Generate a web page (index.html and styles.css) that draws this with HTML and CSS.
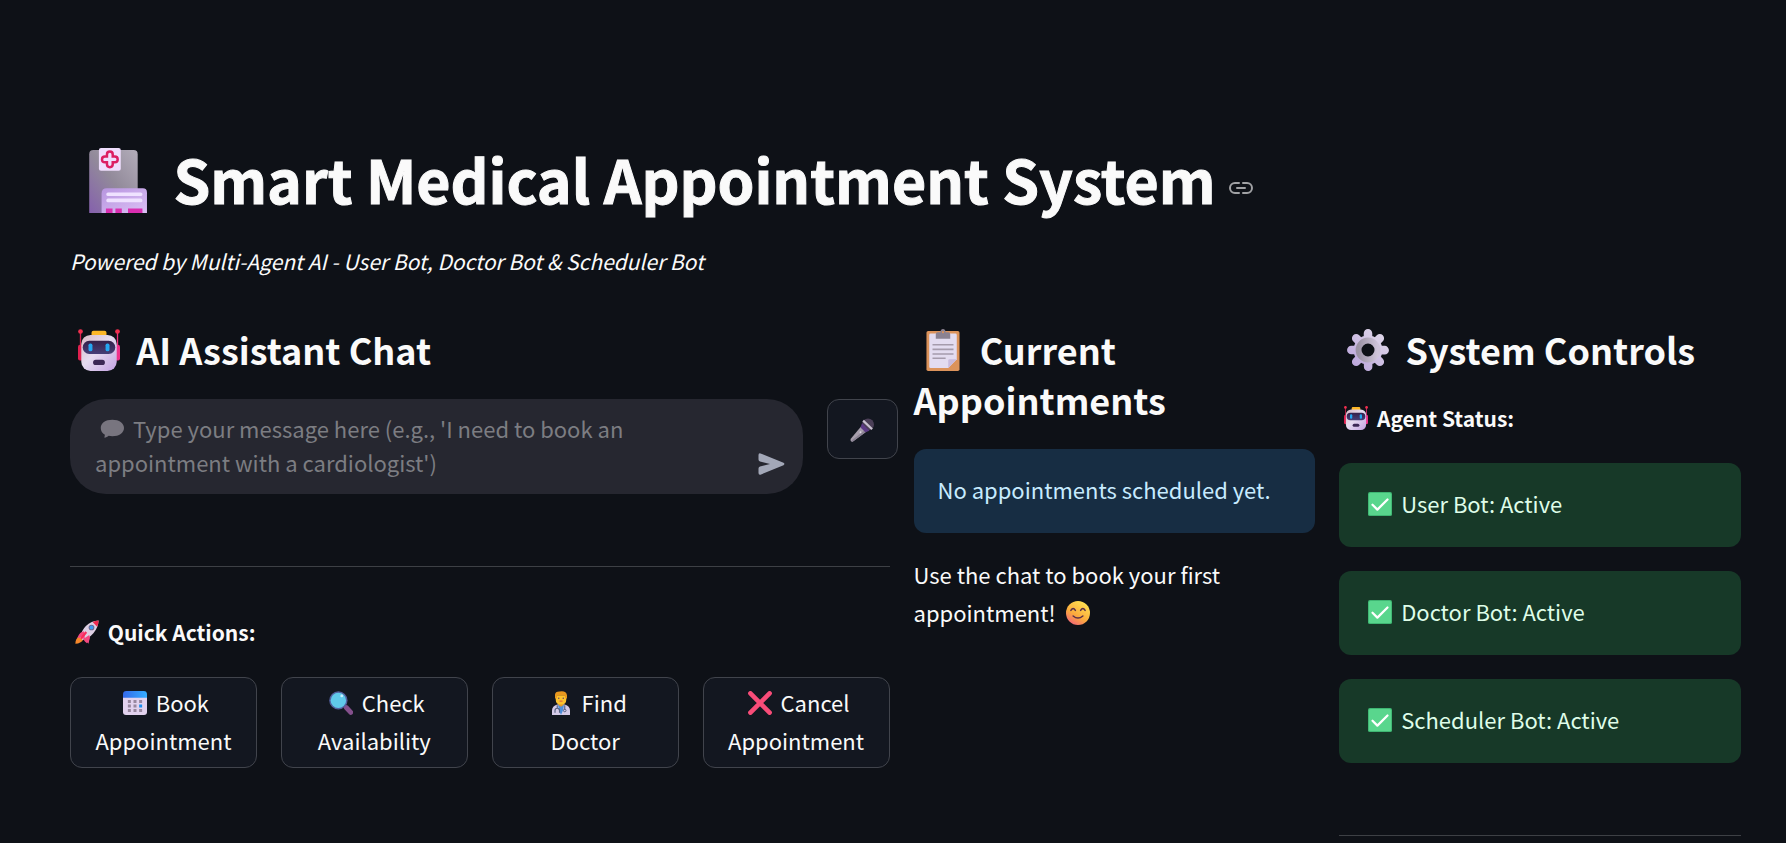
FILE: index.html
```html
<!DOCTYPE html>
<html lang="en">
<head>
    <meta charset="UTF-8">
    <meta name="viewport" content="width=device-width, initial-scale=1.0">
    <title>Smart Medical Appointment System</title>
    <link rel="stylesheet" href="styles.css">
</head>
<body>
    <!-- shared icons -->
    <svg class="sprite" width="0" height="0" aria-hidden="true">
        <defs>
            <linearGradient id="robot-face" x1="0" y1="0" x2="1" y2="1">
                <stop offset="0" stop-color="#d9b9c4"/>
                <stop offset=".45" stop-color="#e6dcf0"/>
                <stop offset="1" stop-color="#c3a0e2"/>
            </linearGradient>
            <linearGradient id="robot-visor" x1="0" y1="0" x2="0" y2="1">
                <stop offset="0" stop-color="#35204a"/>
                <stop offset="1" stop-color="#463f78"/>
            </linearGradient>
        </defs>
        <symbol id="robot" viewBox="0 0 32 32">
            <rect x="1.4" y="1" width="1" height="14" fill="#d8204f"/>
            <rect x="29.6" y="1" width="1" height="14" fill="#f0307c"/>
            <circle cx="1.9" cy="1.9" r="1.8" fill="#f0304f"/>
            <circle cx="30.1" cy="1.9" r="1.8" fill="#f0304f"/>
            <rect x="0" y="12" width="4" height="12" rx="1.5" fill="#e0204f"/>
            <rect x="28" y="12" width="4" height="12" rx="1.5" fill="#f0308a"/>
            <rect x="10.3" y="1.4" width="11.4" height="5" rx="1.5" fill="#fdb727"/>
            <rect x="2.5" y="4.5" width="27" height="27.5" rx="7" fill="url(#robot-face)"/>
            <rect x="3.6" y="9" width="24.8" height="10" rx="5" fill="url(#robot-visor)"/>
            <rect x="8" y="11" width="3" height="6" rx="1.4" fill="#25a6f2"/>
            <rect x="21" y="11" width="3" height="6" rx="1.4" fill="#25a6f2"/>
            <rect x="11.5" y="23.5" width="9" height="4" rx="2" fill="#3c2855"/>
        </symbol>
        <symbol id="check" viewBox="0 0 32 32">
            <rect x="0" y="0" width="32" height="32" rx="2.5" fill="#3fb673"/>
            <rect x="1.2" y="1.2" width="29.6" height="29.6" rx="2" fill="#59d68d"/>
            <path d="M6 17l6.500 6.500L26 10" fill="none" stroke="#fff" stroke-width="3" stroke-linecap="round" stroke-linejoin="round"/>
        </symbol>
    </svg>

    <main class="page">
        <h1 class="title">
            <svg class="icon icon--xl" viewBox="0 0 32 32" aria-hidden="true">
                <defs>
                    <linearGradient id="tower" x1="0" y1="1" x2="1" y2="0">
                        <stop offset="0" stop-color="#8560ad"/>
                        <stop offset=".5" stop-color="#928a9a"/>
                        <stop offset="1" stop-color="#b3adba"/>
                    </linearGradient>
                    <linearGradient id="wing" x1="0" y1="0" x2="1" y2="1">
                        <stop offset="0" stop-color="#b795df"/>
                        <stop offset="1" stop-color="#dcc0f5"/>
                    </linearGradient>
                </defs>
                <path d="M3.500 32V3.500q0-2 2-2H25q2 0 2 2V32z" fill="url(#tower)"/>
                <path d="M9.500 32V22.500q0-2.500 2.500-2.500h17.500q2 0 2 2v10z" fill="url(#wing)"/>
                <rect x="11.800" y="22" width="17.500" height="1.800" rx=".8" fill="#efe2ff"/>
                <rect x="11.800" y="25" width="17.500" height="1.800" rx=".8" fill="#efe2ff"/>
                <path d="M11.600 32v-2.200h3.200V32zM16.200 32v-2.200h3.100V32zM22.300 32v-2.200h7V32z" fill="#d92eb0"/>
                <rect x="8.200" y=".5" width="10.600" height="11" rx="1" fill="#efdefd"/>
                <path d="M13.500 2.200q1.400 0 1.400 1.400v1h1q1.400 0 1.400 1.400t-1.400 1.400h-1v1q0 1.400-1.400 1.400T12.100 8.400v-1h-1Q9.700 7.400 9.700 6t1.400-1.400h1v-1q0-1.400 1.400-1.400z" fill="none" stroke="#dc1f63" stroke-width="1.200"/>
            </svg>
            Smart Medical Appointment System
            <a class="anchor" href="#" aria-label="Link to heading">
                <svg viewBox="0 0 24 24" width="24" height="24" fill="none" stroke="currentColor" stroke-width="2" stroke-linecap="round"><path d="M10 7H6a5 5 0 0 0 0 10h4M14 7h4a5 5 0 0 1 0 10h-4M8 12h8"/></svg>
            </a>
        </h1>
        <p class="subtitle"><em>Powered by Multi-Agent AI - User Bot, Doctor Bot &amp; Scheduler Bot</em></p>

        <div class="columns">
            <section class="col col--wide">
                <h2 class="heading">
                    <svg class="icon icon--lg" aria-hidden="true"><use href="#robot"/></svg>
                    AI Assistant Chat
                </h2>

                <form class="chat">
                    <div class="chat__box">
                        <svg class="chat__bubble" viewBox="0 0 32 32" aria-hidden="true">
                            <path d="M16.500 3.500C7 3.500 1 8 1 14.500c0 4 2 7 5.500 9-.2 2-.7 3-.5 4 2 0 4-1.200 5.500-2.500 1.500.3 3 .5 5 .5 9 0 15.500-4.500 15.500-11S25.500 3.500 16.500 3.500z" fill="#78757f"/>
                        </svg>
                        <textarea class="chat__input" rows="2" aria-label="Message" placeholder="Type your message here (e.g., 'I need to book an appointment with a cardiologist')"></textarea>
                        <button class="chat__send" type="button" aria-label="Send">
                            <svg viewBox="0 0 27 22" width="27" height="22"><path d="M2.500.4L25.500 9.800q1.800 1.200 0 2.400L2.500 21.700Q.5 22.200.5 20v-4.600q0-1.400 1.500-1.800L12 11 2 8.400Q.5 8 .5 6.600V2Q.5-.2 2.500.4z" fill="#a3a8b8"/></svg>
                        </button>
                    </div>
                    <button class="btn btn--mic" type="button" aria-label="Voice input">
                        <svg class="icon" viewBox="0 0 32 32" aria-hidden="true">
                            <path d="M.8 28L15 11l7 7L3.500 31.500Q.3 32 .8 28z" fill="#a79fad"/>
                            <path d="M3.500 31.500L22 18l-2-2L2 30z" fill="#8b8294"/>
                            <circle cx="24" cy="8.500" r="8" fill="#4b3f57"/>
                            <path d="M16 7l10 10-5.500 2L14 12.500z" fill="#5c3a84"/>
                            <path d="M17.500 3.500L29.500 15" stroke="#c9c1cf" stroke-width="3"/>
                            <circle cx="14" cy="19" r="1.200" fill="#e0dae6"/>
                        </svg>
                    </button>
                </form>

                <hr class="line">

                <p class="text text--label"><strong>
                    <svg class="icon" viewBox="0 0 32 32" aria-hidden="true">
                        <path d="M5 22q4-2 6 2 0 4-3.500 5.500Q4 31.500.5 31.500q0-6 4.500-9.500z" fill="#f5872a"/>
                        <path d="M8 16.500L4 23.500l7-1.500zM20 22l-2 9.500-6-7z" fill="#f0508a"/>
                        <path d="M31.500.5q-10 .5-17 7.500Q8.500 14 7 23.500l3 3Q19 24 24.500 17.500 31 10 31.500.5z" fill="#ddd0e4"/>
                        <path d="M31.500.5Q27 .7 23.500 2.500l6 6.500Q31.300 5 31.500.5z" fill="#f0284f"/>
                        <path d="M12 15q-6 1-9 9l8-2q-1 5 5 9 5-6 3-11l-6 4z" fill="#f4477f"/>
                        <path d="M15 16L8 25" stroke="#fa2d5c" stroke-width="3"/>
                        <circle cx="22" cy="10" r="3.800" fill="#6c6289"/>
                        <circle cx="22" cy="10" r="2.600" fill="#3f9cf0"/>
                    </svg>
                    Quick Actions:
                </strong></p>

                <div class="actions">
                    <button class="btn" type="button">
                        <svg class="icon" viewBox="0 0 32 32" aria-hidden="true">
                            <defs>
                                <linearGradient id="cal-top"><stop offset="0" stop-color="#3569ea"/><stop offset="1" stop-color="#35adff"/></linearGradient>
                            </defs>
                            <path d="M0 8h32v20q0 4-4 4H4q-4 0-4-4z" fill="#e2d2ee"/>
                            <path d="M0 9V4.500Q0 0 4.500 0h23Q32 0 32 4.500V9z" fill="url(#cal-top)"/>
                            <path d="M6.500 12h4v4h-4zM14 12h4v4h-4zM21.500 12h4v4h-4zM6.500 18h4v4h-4zM14 18h4v4h-4zM6.500 24h4v4h-4zM14 24h4v4h-4zM21.500 24h4v4h-4z" fill="#98879f"/>
                            <path d="M21.500 18h4v4h-4z" fill="#1e8fee"/>
                        </svg>
                        Book Appointment
                    </button>
                    <button class="btn" type="button">
                        <svg class="icon" viewBox="0 0 32 32" aria-hidden="true">
                            <path d="M19 18l5 5" stroke="#4b5b9a" stroke-width="3"/>
                            <path d="M23 22l6 6.500" stroke="#84508c" stroke-width="6.500" stroke-linecap="round"/>
                            <circle cx="12.500" cy="12.500" r="12.200" fill="#53609e"/>
                            <circle cx="12.500" cy="12.500" r="10.300" fill="#60c9ea"/>
                            <circle cx="17" cy="6.500" r="1.800" fill="#c9f2ff"/>
                        </svg>
                        Check Availability
                    </button>
                    <button class="btn" type="button">
                        <svg class="icon" viewBox="0 0 32 32" aria-hidden="true">
                            <path d="M4 32V26q0-6 7-8h10q7 2 7 8v6z" fill="#d5cbe8"/>
                            <path d="M12 17h8l-1 8-3 7-3-7z" fill="#4f8fd9"/>
                            <path d="M12.500 15h7v3.500L16 21l-3.500-2.500z" fill="#e79a26"/>
                            <path d="M9 5.500h14V12q0 6-7 6t-7-6z" fill="#fcc22d"/>
                            <path d="M8 10V5q0-4.500 6-4.500 9-1.500 10 5V10h-2L21 6H11l-1 4z" fill="#e8971f"/>
                            <circle cx="13" cy="9.500" r="1" fill="#63406d"/>
                            <circle cx="19" cy="9.500" r="1" fill="#63406d"/>
                            <path d="M14 13.500h4" stroke="#d5504b" stroke-width="1.300"/>
                            <path d="M11 19v4M8 29v-3q0-3 3-3t3 3v3M21 19v6" fill="none" stroke="#56607f" stroke-width="1.500"/>
                            <circle cx="21" cy="26" r="1.700" fill="none" stroke="#56607f" stroke-width="1.300"/>
                        </svg>
                        Find<br>Doctor
                    </button>
                    <button class="btn" type="button">
                        <svg class="icon" viewBox="0 0 32 32" aria-hidden="true">
                            <path d="M3.200 3.200l25.600 25.600M28.800 3.200L3.200 28.800" stroke="#f84c78" stroke-width="6.200" stroke-linecap="round"/>
                        </svg>
                        Cancel Appointment
                    </button>
                </div>
            </section>

            <section class="col">
                <h2 class="heading">
                    <svg class="icon icon--lg" viewBox="0 0 32 32" aria-hidden="true">
                        <rect x="3.400" y="1.500" width="25.200" height="30.500" rx="1.300" fill="#dc935b"/>
                        <path d="M6.500 3.500h19q1 0 1 1V23L20 29.700H6.500q-1 0-1-1V4.500q0-1 1-1z" fill="#e3dcf0"/>
                        <path d="M26.500 23H21q-1 0-1 1v5.700z" fill="#c9bbdd"/>
                        <path d="M10.500 7.500V4q0-1.500 1.500-1.500h2Q14.300 0 16 0t2 2.500h2q1.500 0 1.500 1.500v3.500z" fill="#8b8292"/>
                        <circle cx="16" cy="2.400" r=".8" fill="#dc935b"/>
                        <path d="M8 12h16M8 15.500h16M8 19h16M8 22.300h10" stroke="#a59bac" stroke-width="1.200"/>
                    </svg>
                    Current Appointments
                </h2>
                <div class="alert alert--info">No appointments scheduled yet.</div>
                <p class="text">Use the chat to book your first appointment!
                    <svg class="icon" viewBox="0 0 32 32" aria-hidden="true">
                        <defs>
                            <linearGradient id="smile" x1=".8" y1="0" x2=".2" y2="1"><stop offset="0" stop-color="#ffe653"/><stop offset=".6" stop-color="#fbaa3d"/><stop offset="1" stop-color="#f2607c"/></linearGradient>
                        </defs>
                        <circle cx="16" cy="16" r="16" fill="url(#smile)"/>
                        <path d="M6.500 12.500q3-5 6 0M19.500 12.500q3-5 6 0M9.500 20q6.500 5.500 13 0" fill="none" stroke="#5a3049" stroke-width="2" stroke-linecap="round"/>
                    </svg>
                </p>
            </section>

            <section class="col">
                <h2 class="heading">
                    <svg class="icon icon--lg" viewBox="0 0 32 32" aria-hidden="true">
                        <defs>
                            <linearGradient id="gear" x1="0" y1="1" x2="1" y2="0"><stop offset="0" stop-color="#bba5dc"/><stop offset="1" stop-color="#e0d8ea"/></linearGradient>
                            <linearGradient id="gear-ring"><stop offset="0" stop-color="#9c93a5"/><stop offset="1" stop-color="#cfc4da"/></linearGradient>
                        </defs>
                        <g stroke="url(#gear)" stroke-width="6.500" stroke-linecap="round">
                            <path d="M16 3.300l.1 25.400M3.300 16l25.400.1M7 7l18 18M25 7L7 25"/>
                        </g>
                        <circle cx="16" cy="16" r="11" fill="url(#gear)"/>
                        <circle cx="16" cy="16" r="7.200" fill="#0e1117" stroke="url(#gear-ring)" stroke-width="4.500"/>
                    </svg>
                    System Controls
                </h2>
                <p class="text text--label"><strong>
                    <svg class="icon" aria-hidden="true"><use href="#robot"/></svg>
                    Agent Status:
                </strong></p>
                <div class="alert alert--success">
                    <svg class="icon" aria-hidden="true"><use href="#check"/></svg>
                    User Bot: Active
                </div>
                <div class="alert alert--success">
                    <svg class="icon" aria-hidden="true"><use href="#check"/></svg>
                    Doctor Bot: Active
                </div>
                <div class="alert alert--success">
                    <svg class="icon" aria-hidden="true"><use href="#check"/></svg>
                    Scheduler Bot: Active
                </div>
                <hr class="line">
            </section>
        </div>
    </main>
</body>
</html>
```
FILE: styles.css
```css
* {
    box-sizing: border-box;
}
body {
    margin: 0;
    background-color: #0e1117;
    color: #fafafa;
    font-family: "Noto Sans CJK SC", "Noto Sans", sans-serif;
    font-size: 22px;
    line-height: 38px;
}
.sprite {
    position: absolute;
}
.page {
    padding: 139px 45px 0 70px;
}
.icon {
    width: 24px;
    height: 24px;
    margin: 0 4px 0 5px;
    vertical-align: -3px;
}
.icon--lg {
    width: 42px;
    height: 42px;
    margin: 0 8px;
    vertical-align: -6px;
}
.icon--xl {
    width: 66px;
    height: 66px;
    margin: 0 12px;
    vertical-align: -9px;
}
.title {
    margin: 0 0 24px;
    font-size: 59px;
    font-weight: 700;
    line-height: 79px;
    -webkit-text-stroke: 1px #fafafa;
}
.anchor {
    display: inline-block;
    color: #a0a1a4;
    font-size: 22px;
    line-height: 24px;
    vertical-align: 4px;
}
.anchor svg {
    display: block;
}
.subtitle {
    margin: 0 0 44px;
    font-size: 21px;
}
.columns {
    display: flex;
    align-items: flex-start;
    gap: 24px;
}
.col {
    flex: 1 1 calc(25% - 24px);
    min-width: 0;
}
.col--wide {
    flex-basis: calc(50% - 24px);
}
.heading {
    margin: 0 0 25px;
    font-size: 36px;
    font-weight: 600;
    line-height: 50px;
}
.text {
    margin: 0 0 24px;
}
.text--label {
    margin-bottom: 26px;
    font-size: 21px;
}
.line {
    height: 1px;
    margin: 72px 0 46px;
    border: 0;
    background-color: #3d4045;
}

/* chat */
.chat {
    display: flex;
    align-items: flex-start;
    gap: 24px;
    /* mic button sticks out of the column a bit */
    margin-right: -8px;
}
.chat__box {
    position: relative;
    display: flex;
    flex: 1;
    align-items: flex-end;
    padding: 12px 18px 15px 25px;
    border-radius: 36px;
    background-color: #262730;
}
.chat__bubble {
    position: absolute;
    top: 18px;
    left: 30px;
    width: 24px;
    height: 24px;
}
.chat__input {
    flex: 1;
    height: 68px;
    margin-right: 60px;
    padding: 0;
    border: 0;
    outline: none;
    resize: none;
    overflow: hidden;
    background-color: transparent;
    color: #fafafa;
    font: inherit;
    line-height: 34px;
    text-indent: 38px;
}
.chat__input::placeholder {
    color: #7c7d82;
}
.chat__send {
    padding: 0 0 4px;
    border: 0;
    background-color: transparent;
    line-height: 0;
    cursor: pointer;
}

/* buttons */
.btn {
    padding: 5px 18px 8px;
    border: 1px solid #41444c;
    border-radius: 12px;
    background-color: #131720;
    color: #fafafa;
    font: inherit;
    cursor: pointer;
}
.btn:hover {
    border-color: #ff4b4b;
}
.btn--mic {
    width: 71px;
    height: 60px;
    padding: 0;
}
.btn--mic .icon {
    margin: 0;
}
.actions {
    display: grid;
    grid-template-columns: repeat(4, 1fr);
    gap: 24px;
}

.alert {
    margin-bottom: 24px;
    padding: 21px 24px 25px;
    border-radius: 12px;
}
.alert--info {
    margin-bottom: 22px;
    background-color: #172d43;
    color: #c7ebff;
}
.alert--success {
    background-color: #173928;
    color: #dffde9;
}
```
